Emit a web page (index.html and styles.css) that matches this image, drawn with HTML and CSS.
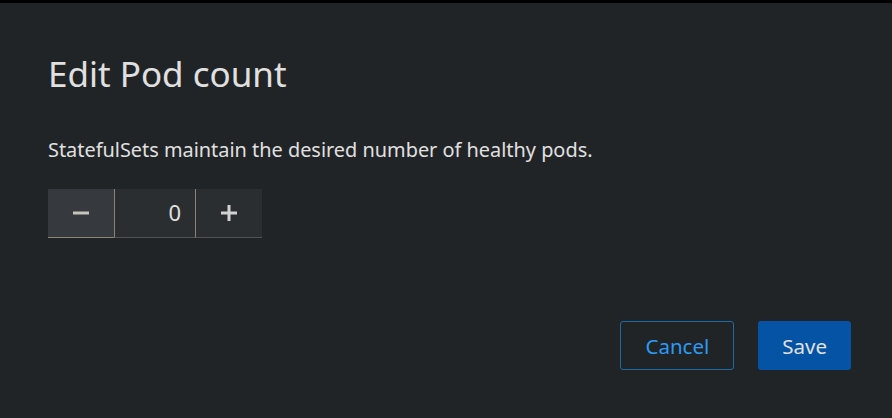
FILE: index.html
```html
<!DOCTYPE html>
<html lang="en">
<head>
    <meta charset="UTF-8">
    <meta name="viewport" content="width=device-width, initial-scale=1.0">
    <title>Edit Pod count</title>
    <link rel="stylesheet" href="styles.css">
</head>
<body>
    <div class="modal">
        <header>
            <h1 class="modal-title">Edit Pod count</h1>
        </header>
        <main class="modal-body">
            <p>StatefulSets maintain the desired number of healthy pods.</p>
            <div class="number-input">
                <button class="step minus" aria-label="Decrement">
                    <svg width="16" height="16" viewBox="0 0 16 16"><rect x="0" y="6.5" width="16" height="3" fill="currentColor"/></svg>
                </button>
                <input class="count" type="text" value="0">
                <button class="step plus" aria-label="Increment">
                    <svg width="16" height="16" viewBox="0 0 16 16"><rect x="0" y="6.5" width="16" height="3" fill="currentColor"/><rect x="6.5" y="0" width="3" height="16" fill="currentColor"/></svg>
                </button>
            </div>
        </main>
        <footer class="modal-footer">
            <button class="btn btn-link">Cancel</button>
            <button class="btn btn-primary">Save</button>
        </footer>
    </div>
</body>
</html>
```
FILE: styles.css
```css
html, body {
    margin: 0;
    height: 100%;
    background-color: #000;
}

body {
    font-family: "Noto Sans", "Open Sans", sans-serif;
    color: #e0e0e0;
}

.modal {
    box-sizing: border-box;
    height: 415px;
    margin-top: 3px;
    background-color: #212427;
    padding: 47px 41px 48px 48px;
    display: flex;
    flex-direction: column;
}

.modal-title {
    margin: 0;
    font-size: 35px;
    font-weight: 400;
    line-height: 48px;
    color: #e0e0e0;
}

.modal-body {
    flex: 1;
}

.modal-body p {
    margin: 37px 0 24px;
    font-size: 19.9px;
    line-height: 30px;
}

/* stepper */
.number-input {
    display: flex;
    height: 49px;
}

.step {
    width: 66px;
    border: none;
    border-bottom: 1px solid #8a8478;
    color: #d2d2d2;
    background-color: #2b2e31;
    display: flex;
    align-items: center;
    justify-content: center;
    padding: 0;
}

.minus {
    background-color: #36393d;
    color: #c8c4bc;
}

.count {
    box-sizing: border-box;
    width: 82px;
    border: none;
    border-left: 1px solid #8a8478;
    border-right: 1px solid #8a8478;
    border-bottom: 1px solid #4f5255;
    background-color: #2b2e31;
    color: #e0e0e0;
    font-family: inherit;
    font-size: 22px;
    text-align: right;
    padding: 0 14px 2px 0;
}

.plus {
    border-bottom-color: #4f5255;
}

.modal-footer {
    display: flex;
    justify-content: flex-end;
    gap: 24px;
}

.btn {
    height: 49px;
    border-radius: 3px;
    font-family: inherit;
    font-size: 20.5px;
}

.btn-link {
    background: transparent;
    border: 1px solid #1c6aa6;
    color: #2b9af3;
    padding: 0 24px;
}

.btn-primary {
    background-color: #0553a4;
    border: none;
    color: #e0e0e0;
    padding: 0 24px;
}
```
